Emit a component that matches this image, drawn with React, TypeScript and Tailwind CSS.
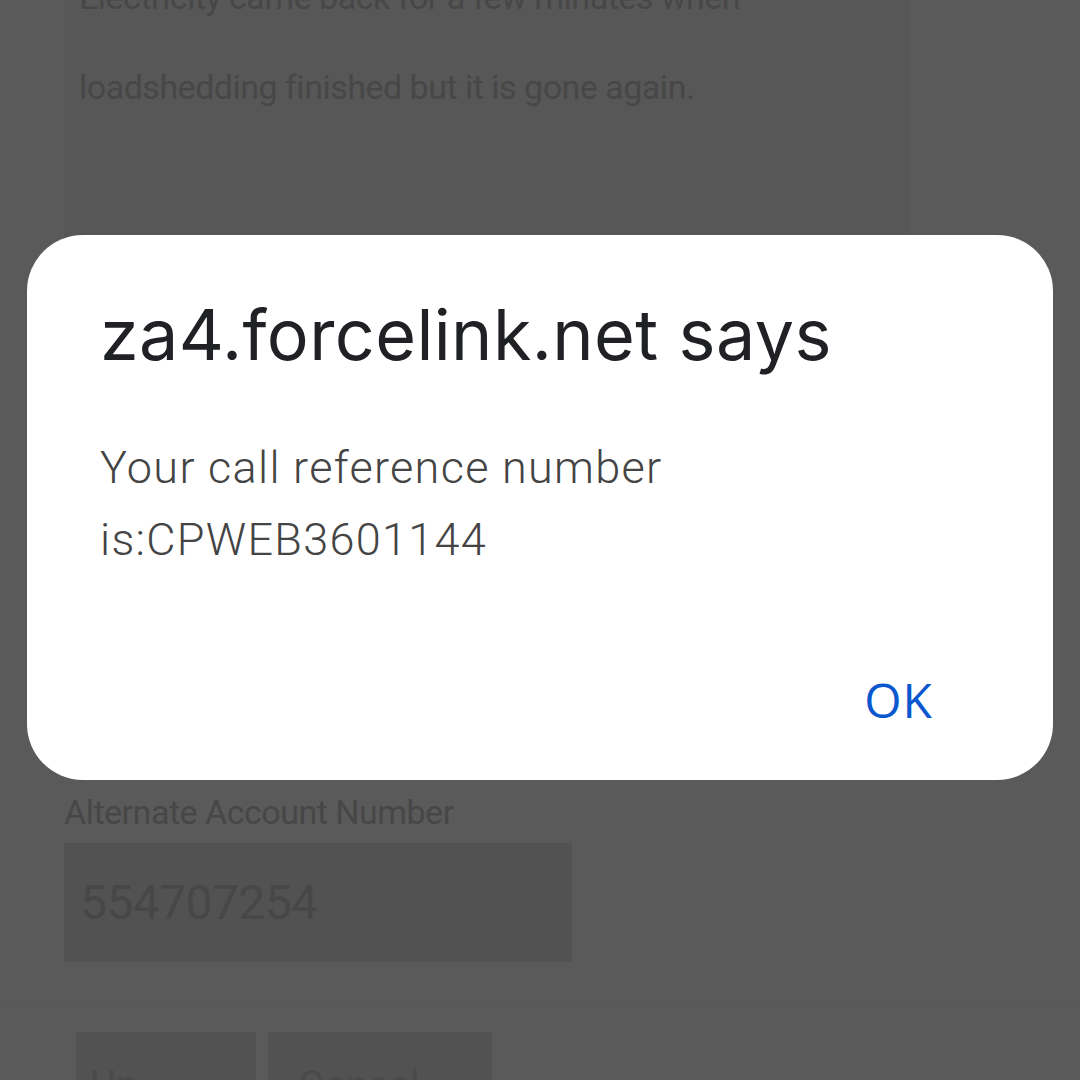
import React from 'react'

export default function App() {
    return (
        <div className="relative w-[1080px] h-[1080px] overflow-hidden bg-[#5a5a5a] font-['Roboto',sans-serif]">
            {/* page behind the dialog, dimmed */}
            <div className="mx-[2px] flex flex-col border-b border-[#575757] h-[1008px]">
                <div className="ml-[62px] w-[846px] h-[700px] shrink-0 -mt-[48px] bg-[#575757] border-x border-[#555555] px-[14px]">
                    <p className="text-[34px] leading-[90px] text-[#474747] tracking-[-0.5px] whitespace-nowrap">
                        Electricity came back for a few minutes when
                        <br />
                        loadshedding finished but it is gone again.
                    </p>
                </div>
                <div className="ml-[62px] mt-[140px]">
                    <p className="text-[34px] leading-[40px] text-[#474747] tracking-[-0.5px]">Alternate Account Number</p>
                    <div className="mt-[11px] w-[508px] h-[119px] bg-[#525252] flex items-center px-[16px]">
                        <span className="text-[48px] text-[#474747] tracking-[-0.6px]">554707254</span>
                    </div>
                </div>
            </div>
            <div className="flex gap-[12px] pl-[76px] pt-[24px]">
                <div className="w-[180px] h-[60px] bg-[#525252] pt-[30px] pl-[14px] text-[40px] leading-[48px] text-[#4a4a4a]">Up</div>
                <div className="w-[224px] h-[60px] bg-[#525252] pt-[30px] pl-[30px] text-[40px] leading-[48px] text-[#4a4a4a]">Cancel</div>
            </div>

            {/* alert dialog */}
            <div className="absolute left-[27px] top-[235px] w-[1026px] h-[545px] bg-white rounded-[56px] flex flex-col">
                <h1 className="ml-[73px] mt-[60px] text-[70px] leading-[80px] text-[#202124] font-['Inter',sans-serif] tracking-[0.4px]">
                    za4.forcelink.net says
                </h1>
                <p className="ml-[73px] mt-[57px] text-[45px] leading-[72px] font-light text-[#444444] tracking-[1.3px]">
                    Your call reference number
                    <br />
                    is:CPWEB3601144
                </p>
                <div className="mt-auto mb-[52px] flex justify-end pr-[120px]">
                    <button className="text-[48px] leading-[56px] font-medium text-[#0b57d0] font-['Open_Sans',sans-serif] tracking-[1px]">OK</button>
                </div>
            </div>
        </div>
    )
}
